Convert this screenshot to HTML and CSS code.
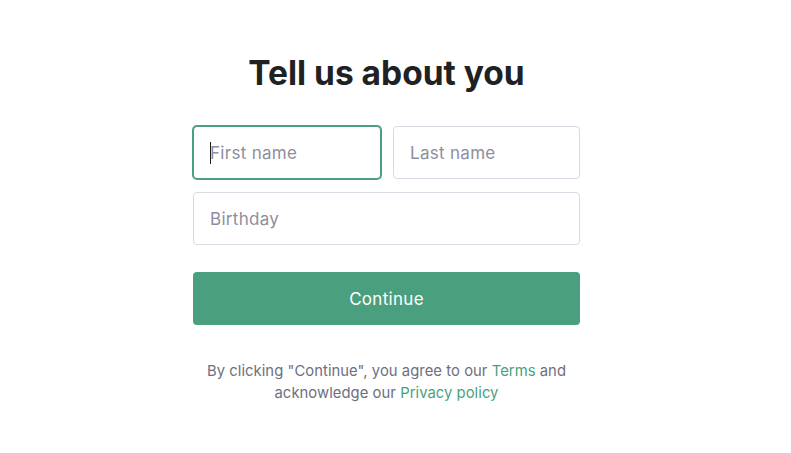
FILE: index.html
```html
<!DOCTYPE html>
<html>
<head>
<meta charset="utf-8">
<link rel="stylesheet" href="styles.css">
</head>
<body>
<main class="page">
  <section class="card">
    <h1 class="title">Tell us about you</h1>
    <form class="form">
      <div class="row">
        <div class="wrap">
          <input class="field field-focus" type="text" placeholder="First name">
          <span class="caret"></span>
        </div>
        <input class="field" type="text" placeholder="Last name">
      </div>
      <input class="field" type="text" placeholder="Birthday">
      <button class="btn" type="button">Continue</button>
    </form>
    <p class="legal">By clicking "Continue", you agree to our <a class="link" href="#">Terms</a> and<br>acknowledge our <a class="link" href="#">Privacy policy</a></p>
  </section>
</main>
</body>
</html>
```

FILE: styles.css
```css
* { box-sizing: border-box; }
html, body { margin: 0; padding: 0; background: #fff; }
body {
  font-family: "Inter", "Noto Sans", sans-serif;
  color: #202123;
}
.page {
  padding: 53px 0 0 193px;
}
.card {
  width: 387px;
  display: flex;
  flex-direction: column;
}
.title {
  margin: 0;
  font-size: 33.5px;
  line-height: 40px;
  font-weight: 700;
  text-align: center;
  color: #202123;
}
.form {
  margin-top: 33px;
  display: flex;
  flex-direction: column;
  gap: 13px;
}
.row {
  display: grid;
  grid-template-columns: 188px 187px;
  gap: 12px;
}
.wrap { position: relative; }
.caret {
  position: absolute;
  left: 17px;
  top: 16px;
  width: 1px;
  height: 22px;
  background: #202123;
}
.field {
  height: 53px;
  width: 100%;
  border: 1px solid #d9d9e3;
  border-radius: 4px;
  padding: 0 16px;
  font-family: inherit;
  font-size: 17px;
  letter-spacing: 0.3px;
  color: #202123;
  outline: none;
  background: #fff;
}
.field::placeholder { color: #8e8ea0; opacity: 1; }
.field-focus {
  border-color: #4a9f7e;
  box-shadow: 0 0 0 1px #4a9f7e;
}
.btn {
  margin-top: 14px;
  height: 53px;
  width: 100%;
  border: none;
  border-radius: 4px;
  background: #4a9f7e;
  color: #fff;
  font-family: inherit;
  font-size: 17px;
  letter-spacing: 0.3px;
  cursor: pointer;
}
.legal {
  margin: 35px 0 0;
  text-align: center;
  font-size: 14.8px;
  letter-spacing: 0.05px;
  line-height: 22px;
  color: #6e6e80;
}
.link { color: #4a9f7e; text-decoration: none; }
```
